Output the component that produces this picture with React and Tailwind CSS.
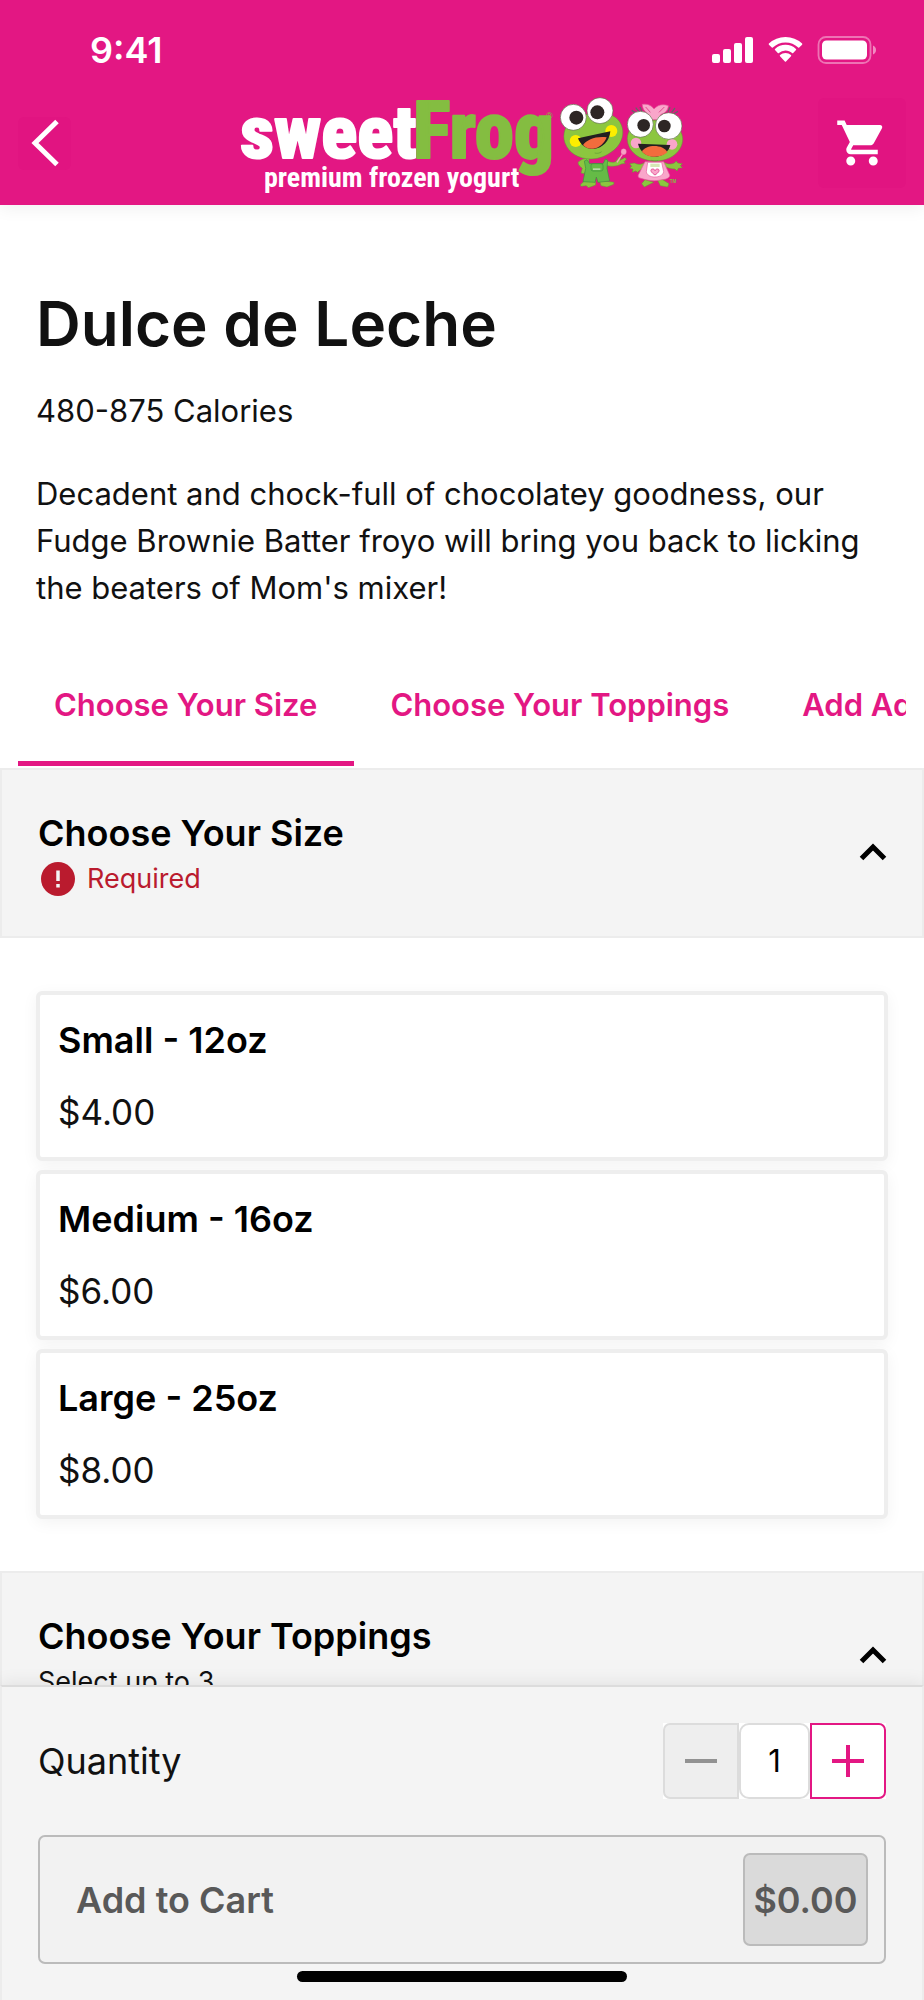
import { useState } from "react";
import { MdShoppingCart } from "react-icons/md";

const tabs = ["Choose Your Size", "Choose Your Toppings", "Add Additional Toppings"];

const sizes = [
  { name: "Small - 12oz", price: "$4.00" },
  { name: "Medium - 16oz", price: "$6.00" },
  { name: "Large - 25oz", price: "$8.00" },
];

function StatusBar() {
  return (
    <div className="flex h-[100px] items-center justify-between pl-[90px] pr-[47px]">
      <span className="text-[36px] leading-none font-semibold">9:41</span>
      <div className="flex items-center gap-[13px]">
        <svg width="42" height="28" viewBox="0 0 42 28" fill="currentColor" aria-hidden="true">
          <rect x="0" y="18" width="8" height="9" rx="2" />
          <rect x="11" y="13" width="8" height="14" rx="2" />
          <rect x="22" y="7" width="8" height="20" rx="2" />
          <rect x="33" y="1" width="8" height="26" rx="2" />
        </svg>
        <svg width="37" height="28" viewBox="0 0 37 28" fill="currentColor" aria-hidden="true">
          <path d="M18.5 6.4c4.9 0 9.400 1.900 12.700 5.200.3.3.7.3 1 0l2.900-2.900c.3-.3.3-.8 0-1.100A24 24 0 0 0 18.500 1 24 24 0 0 0 1.900 7.600c-.3.300-.3.800 0 1.100l2.900 2.900c.3.300.7.300 1 0A18.300 18.300 0 0 1 18.500 6.400z" />
          <path d="M18.500 14.400c2.500 0 4.800.9 6.600 2.600.3.300.8.300 1.100 0l2.800-2.900c.3-.3.3-.8 0-1.100a15.200 15.200 0 0 0-21 0c-.3.300-.3.800 0 1.100l2.800 2.900c.3.300.8.300 1.100 0a9.600 9.600 0 0 1 6.600-2.600z" />
          <path d="M24 20.200c.3-.3.3-.8 0-1.100a8.500 8.500 0 0 0-11 0c-.3.300-.3.800 0 1.100l4.900 5.400c.3.300.8.300 1.100 0z" />
        </svg>
        <svg width="60" height="28" viewBox="0 0 60 28" fill="none" aria-hidden="true">
          <rect x="1.500" y="1" width="52" height="26" rx="7.500" stroke="currentColor" strokeOpacity="0.400" strokeWidth="1.800" />
          <rect x="5" y="4.500" width="45" height="19" rx="4.500" fill="currentColor" />
          <path d="M56 9.500v9c1.800-.8 3-2.500 3-4.500s-1.200-3.700-3-4.500z" fill="currentColor" fillOpacity="0.500" />
        </svg>
      </div>
    </div>
  );
}

function Logo() {
  return (
    <svg width="450" height="100" viewBox="0 0 450 100" role="img" aria-label="sweetFrog premium frozen yogurt" className="shrink-0">
      <g fontFamily="'Roboto Condensed', Roboto, sans-serif" fontWeight="800" strokeLinejoin="round">
        <text x="3" y="65" fontSize="75" fill="#fff" stroke="#fff" strokeWidth="2">sweet</text>
        <text x="176" y="65" fontSize="79" fill="#84bd41" stroke="#84bd41" strokeWidth="2">Frog</text>
        <text x="27" y="94" fontSize="28" fontWeight="700" fill="#fff">premium frozen yogurt</text>
      </g>
      <text x="309" y="26" fontSize="9" fontFamily="'Liberation Sans', sans-serif" fill="#84bd41">®</text>
      <Frogs />
    </svg>
  );
}

function Frogs() {
  return (
    <svg x="322" y="3" width="126" height="93" viewBox="60 33 378 279">
      {/* boy: arms, overalls, feet */}
      <g stroke="#5f9a35" strokeWidth="1.500">
        <path d="M150 220c-14 0-27 4-33 13 1 8 8 13 13 17l-4 14 10 2 6-10 8-6z" fill="#8cc63f" />
        <path d="M198 222c10 10 22 12 32 8l10-14 6 2-3 8 14-8 6 4-8 8 4 5-12 2c-14 8-34 9-50 2z" fill="#8cc63f" />
        <path d="M136 288c-8 8-14 10-10 16l16-2 6 6 22-8 0-12zM182 288l4 14 18 4 20-8 1-6-30-4z" fill="#8cc63f" />
      </g>
      <path d="M144 224l8 12h40l8-14 6 4-2 24 8 38-35 4-5-16-4 16-36-2 8-40-4-22z" fill="#65bb46" stroke="#3d9140" strokeWidth="2" />
      <rect x="156" y="236" width="36" height="22" rx="6" fill="#65bb46" stroke="#3d9140" strokeWidth="2" />
      <rect x="162" y="250" width="22" height="5" fill="#b7d8a4" />
      <path d="M234 232l16-24" stroke="#f7a1c4" strokeWidth="4" />
      <ellipse cx="254" cy="200" rx="8" ry="9" fill="#f7a1c4" stroke="#d97aa5" />
      {/* boy: head */}
      <path d="M78 134c12-30 50-46 90-50 34-4 78 8 83 52 4 42-34 74-76 84-42 8-84-10-97-46-5-14-4-28 0-40z" fill="#8cc63f" stroke="#5f9a35" strokeWidth="1.500" />
      <circle cx="110" cy="168" r="18" fill="#fdee00" />
      <circle cx="217" cy="138" r="18" fill="#fdee00" />
      <path d="M117 160l97-21c-2 30-24 50-49 53-22 2-41-12-48-32z" fill="#231f20" />
      <path d="M132 180c12-16 38-27 71-23-7 18-22 32-40 34-13 2-24-4-31-11z" fill="#f36c3d" />
      <path d="M167 204c8 2 14 1 21-4" fill="none" stroke="#5f9a35" strokeWidth="2" />
      <g fill="#fff" stroke="#5b6b44" strokeWidth="2">
        <circle cx="103" cy="97" r="39" />
        <circle cx="183" cy="77" r="39" />
      </g>
      <circle cx="112" cy="98" r="21" fill="#2d2624" />
      <circle cx="175" cy="82" r="21" fill="#2d2624" />
      {/* girl: lashes and bow */}
      <path d="M278 76l14 9M290 68l12 14M303 66l6 14M417 79l-14 8M408 69l-10 13M393 67l-6 13" stroke="#666" strokeWidth="4" />
      <path d="M345 72c-8-12-20-16-35-14 0 12 6 22 18 30l10 16h18l10-16c14-4 20-12 22-26-18-6-32-2-43 10z" fill="#f9a6ca" stroke="#e65c9c" strokeWidth="2" />
      <path d="M320 66l14 16M376 66l-16 16" stroke="#e24a90" strokeWidth="3" />
      {/* girl: arms, feet, dress */}
      <g fill="#8cc63f" stroke="#5f9a35" strokeWidth="1.500">
        <path d="M320 230c-12 10-22 10-34 4l-14 2 6 8-6 6 10 2-2 10 10-4 6 4c8-10 22-12 30-18z" />
        <path d="M372 230c12 6 20 10 34 4l6-6 4 6 14 2-6 6 6 6-12 2-4 8-6-6c-12 0-26-4-38-12z" />
        <path d="M318 284l-10 12 8 10 28-14zM356 286l8 16 22 4 4-10-22-14z" />
      </g>
      <path d="M318 230h56l18 40c2 8-12 14-24 14-18 5-38 4-62-4-10-2-10-8-6-14z" fill="#f9a6ca" stroke="#e65c9c" strokeWidth="2" />
      <path d="M326 232h42l6 28c-2 12-14 16-27 16s-24-6-25-16z" fill="#fff" stroke="#e65c9c" strokeWidth="2" />
      <path d="M334 236h28v10h-28z" fill="#d6e7b5" />
      <path d="M348 270c-16-10-14-18-7-18 4 0 6 2 7 5 1-3 4-5 7-5 7 0 9 8-7 18z" fill="#f9a6ca" stroke="#df3c88" strokeWidth="2.500" />
      {/* girl: head */}
      <path d="M265 160c2-40 40-54 84-54s80 18 82 56c0 38-38 66-82 66s-84-26-84-68z" fill="#8cc63f" stroke="#5f9a35" strokeWidth="1.500" />
      <circle cx="291" cy="174" r="16" fill="#f9a6ca" />
      <circle cx="399" cy="178" r="16" fill="#f9a6ca" />
      <path d="M297 176l97 4c-4 20-24 35-46 35-26 0-46-16-51-39z" fill="#231f20" />
      <path d="M309 200c10-22 64-24 76 2-8 8-22 13-37 13-17 0-31-6-39-15z" fill="#f36c3d" />
      <path d="M337 226c8 2 14 2 21 0" fill="none" stroke="#5f9a35" strokeWidth="2" />
      <g fill="#fff" stroke="#5b6b44" strokeWidth="2">
        <circle cx="304" cy="118" r="39" />
        <circle cx="389" cy="123" r="40" />
      </g>
      <circle cx="314" cy="121" r="19" fill="#2d2624" />
      <circle cx="376" cy="123" r="19" fill="#2d2624" />
      <text x="392" y="293" fontSize="14" fontFamily="'Liberation Sans', sans-serif" fontWeight="700" fill="#84bd41">TM</text>
    </svg>
  );
}

function Header() {
  return (
    <header className="relative z-10 h-[205px] shrink-0 bg-[#e31783] text-white shadow-[0_4px_16px_rgba(0,0,0,0.060)]">
      <StatusBar />
      <div className="flex h-[86px] items-center justify-between pl-[18px] pr-[18px]">
        <div className="flex flex-1">
          <button type="button" aria-label="Back" className="flex size-[53px] items-center justify-center rounded-md bg-[#e11481]">
            <svg width="30" height="50" viewBox="0 0 30 50" fill="none" stroke="currentColor" strokeWidth="5" aria-hidden="true">
              <path d="M27 3.500 5 25l22 21.500" />
            </svg>
          </button>
        </div>
        <Logo />
        <div className="flex flex-1 justify-end">
          <button type="button" aria-label="Cart" className="flex h-[90px] w-[88px] items-center justify-center rounded-md bg-[#e11481]">
            <MdShoppingCart size={54} aria-hidden="true" />
          </button>
        </div>
      </div>
    </header>
  );
}

function SectionHeader({ title, open, onToggle, children }) {
  return (
    <div className="flex h-[170px] items-center justify-between border-2 border-[#ececec] bg-[#f4f4f4] pr-[33px] pl-[36px]">
      <div className="flex flex-col pt-1">
        <h2 className="text-[36px] leading-[48px] font-semibold text-black">{title}</h2>
        <div className="flex h-[44px] items-center text-[27px] leading-[44px]">{children}</div>
      </div>
      <button type="button" aria-expanded={open} aria-label={"Toggle " + title} onClick={onToggle} className="flex size-[32px] items-center justify-center text-black">
        <svg width="32" height="32" viewBox="0 0 32 32" fill="none" stroke="currentColor" strokeWidth="5" className={open ? "" : "rotate-180"} aria-hidden="true">
          <path d="M4.500 21.500l11.500-11.500 11.500 11.500" />
        </svg>
      </button>
    </div>
  );
}

function Stepper({ value, onChange }) {
  return (
    <div className="flex h-[76px] bg-white">
      <button type="button" aria-label="Decrease quantity" disabled={value <= 1} onClick={() => onChange(value - 1)} className="flex w-[76px] items-center justify-center rounded-l-[7px] border-2 border-[#dcdcdc] bg-[#eeeeee] text-[#929292]">
        <svg width="32" height="32" viewBox="0 0 32 32" stroke="currentColor" strokeWidth="4" aria-hidden="true">
          <path d="M0 16h32" />
        </svg>
      </button>
      <input
        id="quantity"
        type="text"
        inputMode="numeric"
        value={value}
        onChange={(e) => onChange(Math.max(1, Number(e.target.value) || 1))}
        className="w-[71px] rounded-[10px] border-2 border-[#dcdcdc] bg-white text-center text-[31px] text-black outline-none"
      />
      <button type="button" aria-label="Increase quantity" onClick={() => onChange(value + 1)} className="flex w-[76px] items-center justify-center rounded-r-[7px] border-2 border-[#e31783] bg-white text-[#e31783]">
        <svg width="32" height="32" viewBox="0 0 32 32" stroke="currentColor" strokeWidth="4" aria-hidden="true">
          <path d="M0 16h32M16 0v32" />
        </svg>
      </button>
    </div>
  );
}

export default function App() {
  const [tab, setTab] = useState(0);
  const [quantity, setQuantity] = useState(1);
  const [sizesOpen, setSizesOpen] = useState(true);
  const [toppingsOpen, setToppingsOpen] = useState(true);

  return (
    <div className="flex h-screen flex-col bg-white font-['Inter',sans-serif] text-[#111111]">
      <Header />
      <main className="min-h-0 flex-1 overflow-y-auto [scrollbar-width:none]">
        <section className="px-9 pt-[79px]">
          <h1 className="text-[62px] leading-[80px] font-semibold">Dulce de Leche</h1>
          <p className="mt-[23px] text-[31px] leading-[47px]">480-875 Calories</p>
          <p className="mt-[36px] text-[31px] leading-[47px]">
            Decadent and chock-full of chocolatey goodness, our Fudge Brownie Batter froyo will bring you back to licking the beaters of Mom's mixer!
          </p>
        </section>

        <nav className="mx-[18px] mt-[34px] mb-[2px] flex h-[121px] overflow-x-auto overflow-y-hidden [scrollbar-width:none]">
          {tabs.map((label, i) => (
            <button
              key={label}
              type="button"
              onClick={() => setTab(i)}
              className={
                "shrink-0 border-b-[5px] pt-[2px] pr-[37px] pl-[36px] text-[31px] leading-none font-semibold text-[#e31783] " +
                (tab === i ? "border-[#e31783]" : "border-transparent")
              }
            >
              {label}
            </button>
          ))}
        </nav>

        <SectionHeader title="Choose Your Size" open={sizesOpen} onToggle={() => setSizesOpen(!sizesOpen)}>
          <svg width="34" height="34" viewBox="0 0 34 34" className="mr-[12px] ml-[3px]" aria-hidden="true">
            <circle cx="17" cy="17" r="17" fill="#ba1b2e" />
            <path d="M17 8.500v10.500M17 22v3.500" stroke="#f4f4f4" strokeWidth="3.500" />
          </svg>
          <span className="text-[#ba1b2e]">Required</span>
        </SectionHeader>

        {sizesOpen && (
          <div className="flex flex-col gap-[9px] px-9 pt-[53px] pb-[52px]">
            {sizes.map((s) => (
              <button key={s.name} type="button" className="flex flex-col rounded-md border-4 border-[#eeeeee] bg-white px-[18px] py-[9px] text-left leading-[72px] shadow-[0_4px_16px_rgba(0,0,0,0.050)]">
                <span className="text-[36px] font-semibold text-black">{s.name}</span>
                <span className="text-[35px]">{s.price}</span>
              </button>
            ))}
          </div>
        )}

        <SectionHeader title="Choose Your Toppings" open={toppingsOpen} onToggle={() => setToppingsOpen(!toppingsOpen)}>
          <span>Select up to 3</span>
        </SectionHeader>
      </main>

      <footer className="relative z-10 shrink-0 border-2 border-b-0 border-[#ececec] border-t-[#dcdcdc] bg-[#f4f4f4] px-9 pt-[36px] pb-[18px] shadow-[0_-2px_16px_rgba(0,0,0,0.080)]">
        <div className="flex items-center justify-between">
          <label htmlFor="quantity" className="text-[36px]">Quantity</label>
          <Stepper value={quantity} onChange={setQuantity} />
        </div>
        <button type="button" className="mt-[36px] flex h-[129px] w-full items-center justify-between rounded-[7px] border-2 border-[#bbbbbb] bg-[#f2f2f2] pr-[16px] pl-[36px] text-[36px] font-semibold text-[#595959]">
          <span>Add to Cart</span>
          <span className="flex h-[93px] w-[125px] items-center justify-center rounded-[7px] border-2 border-[#bbbbbb] bg-[#dadada]">$0.00</span>
        </button>
        <div className="mx-auto mt-[7px] h-[11px] w-[40%] max-w-[330px] rounded-full bg-black" />
      </footer>
    </div>
  );
}
